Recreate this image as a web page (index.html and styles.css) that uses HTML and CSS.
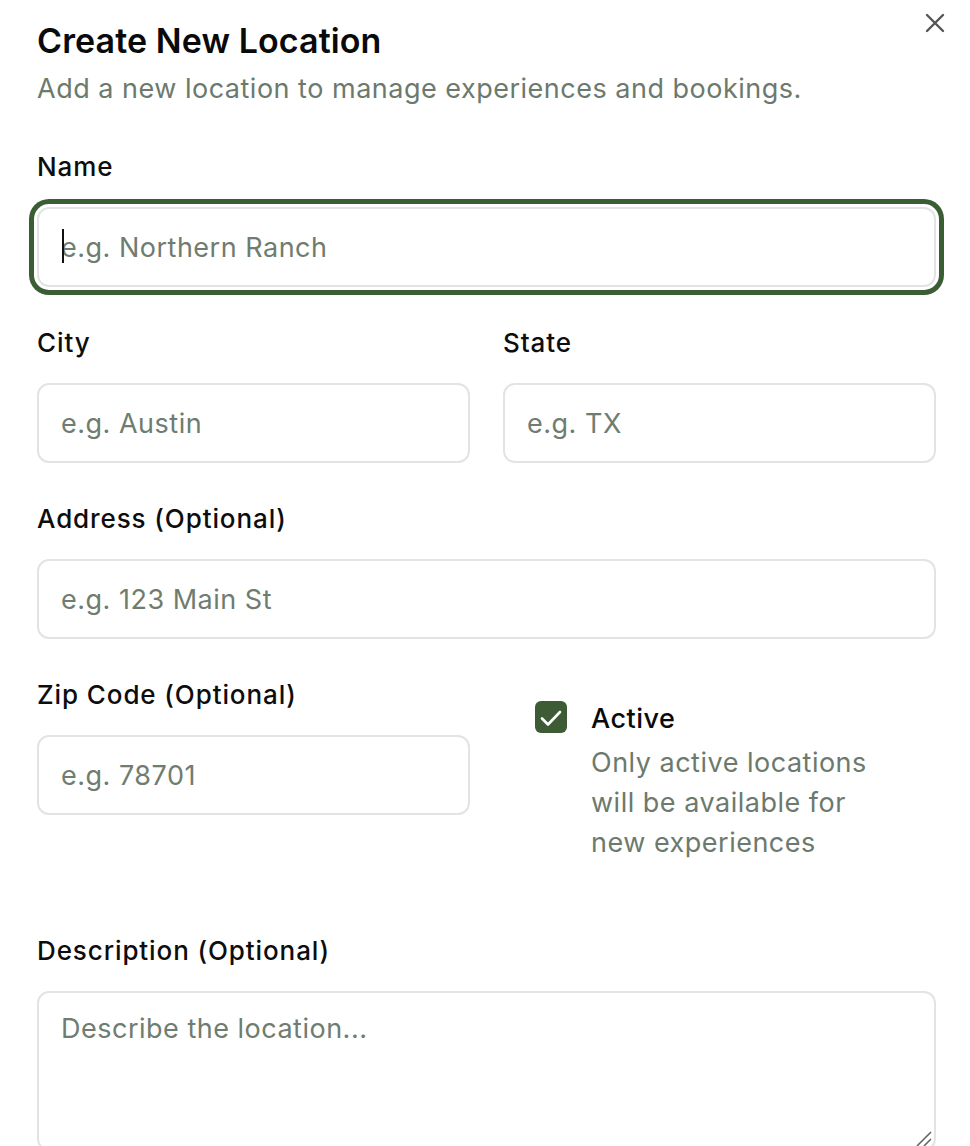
FILE: index.html
```html
<!DOCTYPE html>
<html lang="en">
<head>
<meta charset="utf-8">
<title>Create New Location</title>
<link rel="stylesheet" href="styles.css">
</head>
<body>
<div class="dialog">
  <button class="close" aria-label="Close">
    <svg width="20" height="20" viewBox="0 0 20 20"><path d="M2 2L18 18M18 2L2 18" stroke="#555" stroke-width="2.4" stroke-linecap="round"/></svg>
  </button>
  <header class="head">
    <h1 class="title">Create New Location</h1>
    <p class="subtitle">Add a new location to manage experiences and bookings.</p>
  </header>
  <form class="form">
    <div class="field">
      <label class="label">Name</label>
      <div class="focus-wrap">
        <input class="input focused" placeholder="e.g. Northern Ranch">
        <span class="caret"></span>
      </div>
    </div>
    <div class="row">
      <div class="field">
        <label class="label">City</label>
        <input class="input" placeholder="e.g. Austin">
      </div>
      <div class="field">
        <label class="label">State</label>
        <input class="input" placeholder="e.g. TX">
      </div>
    </div>
    <div class="field">
      <label class="label">Address (Optional)</label>
      <input class="input" placeholder="e.g. 123 Main St">
    </div>
    <div class="row">
      <div class="field">
        <label class="label">Zip Code (Optional)</label>
        <input class="input" placeholder="e.g. 78701">
      </div>
      <div class="check-box">
        <span class="checkbox">
          <svg width="32" height="32" viewBox="0 0 32 32"><path d="M7 17.5L13 23.5L25 11" fill="none" stroke="#fff" stroke-width="2.6" stroke-linecap="round" stroke-linejoin="round"/></svg>
        </span>
        <div class="check-text">
          <div class="check-label">Active</div>
          <p class="check-desc">Only active locations will be available for new experiences</p>
        </div>
      </div>
    </div>
    <div class="field">
      <label class="label">Description (Optional)</label>
      <div class="ta-wrap">
        <textarea class="textarea" placeholder="Describe the location..."></textarea>
        <svg class="grip" width="18" height="18" viewBox="0 0 18 18"><path d="M3 17L17 3M10 17L17 10" stroke="#666" stroke-width="1.6"/></svg>
      </div>
    </div>
  </form>
</div>
</body>
</html>
```
FILE: styles.css
```css
* { box-sizing: border-box; }
html, body { margin: 0; padding: 0; background: #fff; }
body { font-family: Inter, "Noto Sans", sans-serif; color: #0a0a0a; overflow: hidden; }
.dialog { position: relative; padding: 0 34px 0 37px; width: 970px; }
.close { position: absolute; top: 12px; right: 24px; width: 22px; height: 22px; padding: 1px; border: 0; background: none; }
.head { padding-top: 21px; }
.title { margin: 0; font-size: 34px; line-height: 40px; font-weight: 600; letter-spacing: 0.1px; }
.subtitle { margin: 8px 0 0; font-size: 27px; line-height: 40px; letter-spacing: 0.5px; color: #6c7a6d; }
.form { display: flex; flex-direction: column; gap: 42px; margin-top: 44px; }
.field { display: flex; flex-direction: column; gap: 26px; }
.label { font-size: 26px; line-height: 28px; font-weight: 500; letter-spacing: 0.9px; color: #0d0d0d; }
.input { width: 100%; height: 80px; border: 2px solid #e3e3e3; border-radius: 12px; padding: 0 22px; font-family: inherit; font-size: 27px; letter-spacing: 0.5px; color: #0a0a0a; background: #fff; outline: none; }
.input::placeholder, .textarea::placeholder { color: #6f7c70; }
.focus-wrap { position: relative; }
.input.focused { box-shadow: 0 0 0 3px #fff, 0 0 0 8px #3b5d34; }
.caret { position: absolute; left: 25px; top: 22px; width: 2px; height: 34px; background: #111; }
.row { display: grid; grid-template-columns: 1fr 1fr; column-gap: 33px; align-items: start; }
.check-box { display: flex; gap: 24px; padding: 20px 40px 32px 32px; }
.checkbox { flex: none; width: 32px; height: 32px; border-radius: 6px; background: #3d5c35; }
.checkbox svg { display: block; }
.check-text { padding-top: 2px; }
.check-label { font-size: 27px; line-height: 32px; font-weight: 500; letter-spacing: 0.5px; color: #0a0a0a; }
.check-desc { margin: 8px 0 0; font-size: 27px; line-height: 40px; letter-spacing: 0.5px; color: #6c7a6d; }
.ta-wrap { position: relative; }
.textarea { display: block; width: 100%; height: 160px; border: 2px solid #e3e3e3; border-radius: 12px; padding: 16px 22px; font-family: inherit; font-size: 27px; line-height: 40px; letter-spacing: 0.5px; resize: none; outline: none; }
.grip { position: absolute; right: 4px; bottom: 4px; }
```
